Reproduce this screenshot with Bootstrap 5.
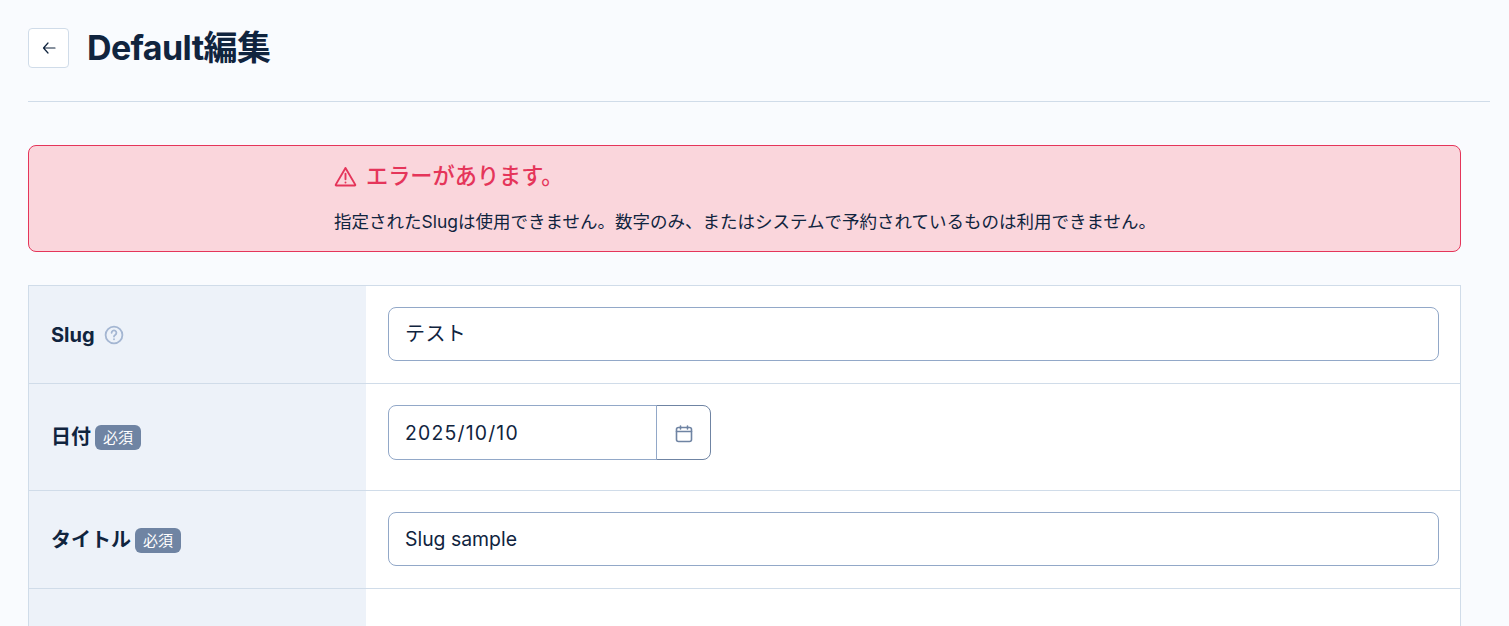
<!DOCTYPE html>
<html lang="ja">
<head>
  <meta charset="UTF-8">
  <title>Default編集</title>
  <link href="https://cdn.jsdelivr.net/npm/bootstrap@5.3.0/dist/css/bootstrap.min.css" rel="stylesheet">
  <style>
    html, body { height: 626px; overflow: hidden; }
    body { background-color: #f9fbfe; color: #10243e; font-family: "Inter", "Noto Sans CJK JP", sans-serif; }
    .page-wrap { padding: 0 19px 0 28px; }
    .page-head { height: 102px; padding-top: 28px; border-bottom: 1px solid #d0dce9; }
    .back-btn { width: 41px; height: 40px; padding: 0; background: #fff; border: 1px solid #d0dce9; border-radius: 4px; }
    .page-title { font-size: 34px; font-weight: 700; line-height: 40px; margin: 0 0 0 18px; color: #10243e; letter-spacing: -.6px; }
    .content-wrap { width: 1433px; padding-top: 43px; }
    .err-box { height: 107px; margin-bottom: 33px; padding: 15px 0 0 305px; background: #fad6dc; border: 1px solid #e5355a; border-radius: 8px; color: #10243e; }
    .err-title { color: #e5355a; font-size: 22.2px; font-weight: 500; line-height: 30px; gap: 9px; margin-bottom: 16px; }
    .err-text { font-size: 17.5px; line-height: 30px; }
    .form-sheet { background: #fff; border: solid #d0dce9; border-width: 1px 1px 0; }
    .form-line { display: flex; border-bottom: 1px solid #d0dce9; }
    .form-line:last-child { border-bottom: 0; height: 60px; }
    .form-label-cell { width: 337px; flex: none; padding: 0 22px; background: #edf2f9; font-size: 20px; font-weight: 700; gap: 4px; display: flex; align-items: center; }
    .form-value-cell { flex: 1; padding: 21px 21px 22px 22px; }
    .date-line .form-value-cell { padding-bottom: 30px; }
    .req-tag { background: #6f84a3; color: #fff; font-size: 15px; font-weight: 400; padding: 0 8px; height: 25px; line-height: 25px; border-radius: 6px; margin-top: 1px; }
    .form-control.text-field { height: 54px; font-size: 19.4px; color: #10243e; padding: 0 16px 1px; border: 1px solid #92a8c8; border-radius: 8px; }
    .form-control.text-field.kana-field { font-size: 20px; letter-spacing: .4px; padding-bottom: 3px; }
    .date-group { width: 323px; }
    .date-group .form-control { height: 55px; font-size: 19.4px; letter-spacing: 1.2px; color: #10243e; padding: 0 16px; border: 1px solid #92a8c8; border-radius: 8px 0 0 8px; }
    .date-btn { width: 55px; padding: 0; background: #fff; border: 1px solid #6f84a3; border-radius: 0 8px 8px 0; margin-left: -1px; }
    .help-icon { margin-left: 5px; }
  </style>
</head>
<body>
  <div class="page-wrap">
    <div class="page-head d-flex align-items-start">
      <button class="back-btn d-flex align-items-center justify-content-center" type="button">
        <svg width="16" height="16" viewBox="0 0 16 16" fill="none" stroke="#10243e" stroke-width="1.2" stroke-linecap="round" stroke-linejoin="round"><path d="M14 8H2.500M7 3 2.500 8 7 13"/></svg>
      </button>
      <h1 class="page-title">Default編集</h1>
    </div>

    <div class="content-wrap">
      <div class="err-box">
        <div class="err-title d-flex align-items-center">
          <svg width="23" height="21" viewBox="0 0 24 22" fill="none" stroke="#e5355a" stroke-width="2" stroke-linecap="round" stroke-linejoin="round"><path d="M12 2 1.800 19.500a.6.6 0 0 0 .5.9h19.400a.6.6 0 0 0 .5-.9z"/><path d="M12 8v6M12 17.200v.1"/></svg>
          <span>エラーがあります。</span>
        </div>
        <div class="err-text">指定されたSlugは使用できません。数字のみ、またはシステムで予約されているものは利用できません。</div>
      </div>

      <div class="form-sheet">
        <div class="form-line">
          <div class="form-label-cell">Slug
            <svg class="help-icon" width="20" height="20" viewBox="0 0 20 20" fill="none" stroke="#a4b6d2" stroke-width="1.8" stroke-linecap="round"><circle cx="10" cy="10" r="8.400"/><path d="M7.600 7.800a2.400 2.400 0 1 1 3.600 2.100c-.8.500-1.200.9-1.200 1.700"/><path d="M10 14.200v.1"/></svg>
          </div>
          <div class="form-value-cell"><input class="form-control text-field kana-field" type="text" value="テスト"></div>
        </div>
        <div class="form-line date-line">
          <div class="form-label-cell">日付<span class="req-tag">必須</span></div>
          <div class="form-value-cell">
            <div class="input-group date-group">
              <input class="form-control" type="text" value="2025/10/10">
              <button class="date-btn" type="button">
                <svg width="20" height="20" viewBox="0 0 20 20" fill="none" stroke="#6f84a3" stroke-width="1.6" stroke-linecap="round" stroke-linejoin="round"><rect x="2.500" y="3.500" width="15" height="14" rx="2"/><path d="M2.500 7.500h15M6.500 2v3M13.500 2v3"/></svg>
              </button>
            </div>
          </div>
        </div>
        <div class="form-line">
          <div class="form-label-cell">タイトル<span class="req-tag">必須</span></div>
          <div class="form-value-cell"><input class="form-control text-field" type="text" value="Slug sample"></div>
        </div>
        <div class="form-line">
          <div class="form-label-cell"></div>
          <div class="form-value-cell"></div>
        </div>
      </div>
    </div>
  </div>
  <script src="https://cdn.jsdelivr.net/npm/bootstrap@5.3.0/dist/js/bootstrap.bundle.min.js"></script>
</body>
</html>
